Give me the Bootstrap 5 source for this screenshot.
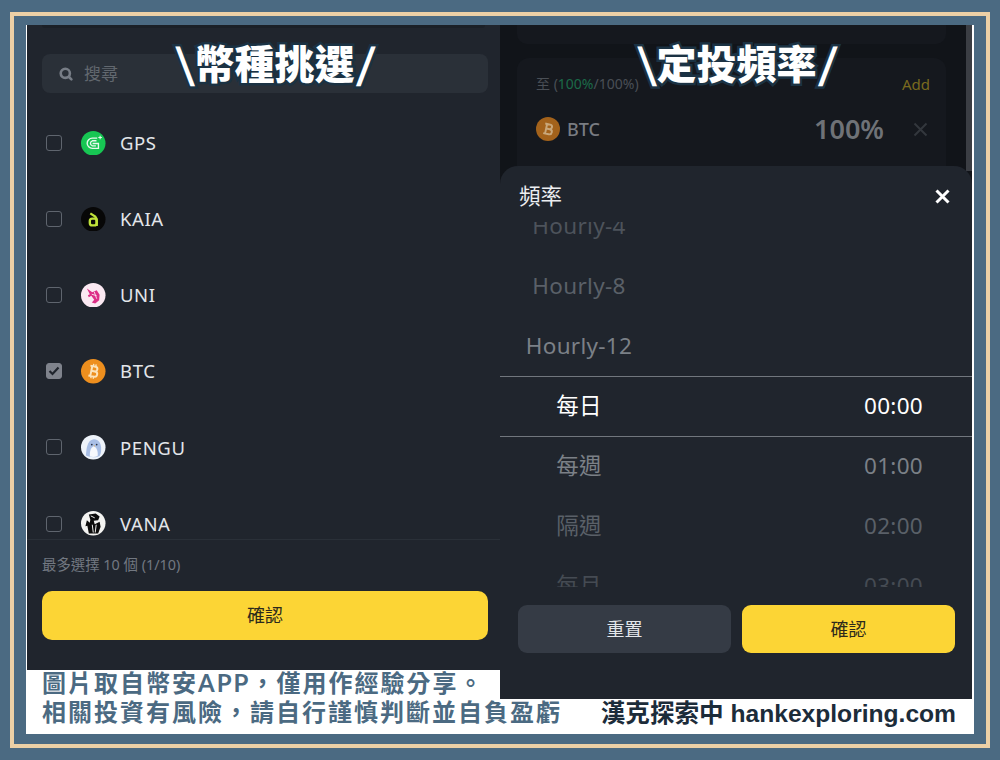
<!DOCTYPE html>
<html lang="zh-Hant">
<head>
<meta charset="utf-8">
<title>幣安定投</title>
<link href="https://cdn.jsdelivr.net/npm/bootstrap@5.3.0/dist/css/bootstrap.min.css" rel="stylesheet">
<style>
html,body{height:100%;margin:0}
body{background:#4b6a82;font-family:"Noto Sans","Noto Sans CJK TC",sans-serif;overflow:hidden}
.stage{position:relative;width:1000px;height:760px;padding:25px 26px 26px 26px}
.frame-line{position:absolute;left:10px;top:12px;width:980px;height:736px;border:4px solid #ecd0a6;pointer-events:none}
.sheet-white{background:#fff;height:709px;width:948px;display:flex;padding-left:1px;padding-right:2px}
.col-l{width:473px;display:flex;flex-direction:column;flex:none}
.col-r{width:472px;display:flex;flex-direction:column;flex:none}
.pane-l{height:645px;background:#20252d;display:flex;flex-direction:column;position:relative}
.top-stub{height:3px;margin:0 15px;background:#1b2027;border-radius:0 0 8px 8px}
.search-box{margin:26px 12px 0 15px;height:39px;background:#2a3038;border-radius:8px;display:flex;align-items:center;padding-left:16px;gap:10px;color:#62686f;font-size:17px}
.coin-list{flex:1;overflow:hidden;margin-top:12px;min-height:0}
.coin-row{height:76.1px;display:flex;align-items:center;padding-left:19px;color:#e3e6ea;font-size:18.500px;letter-spacing:.6px;font-family:"Noto Sans",sans-serif}
.tick{width:16px;height:16px;border:1.2px solid #5f656e;border-radius:3px;flex:none;display:flex;align-items:center;justify-content:center}
.tick.on{background:#7f838c;border-color:#7f838c}
.coin-ico{width:24.500px;height:24.500px;margin:0 14.500px 0 19px;flex:none;display:block}
.pane-foot{border-top:1px solid #2a3038;padding:0 12px 30px 15px;height:131px}
.foot-note{font-size:14.400px;color:#727881;line-height:17px;margin-top:16px;margin-bottom:18px;white-space:nowrap}
.btn-gold{display:block;width:100%;height:49px;background:#fcd535;border:0;border-radius:10px;color:#2c2a1c;font-size:18px;padding:0}
.btn-slate{background:#353b45;border:0;border-radius:9px;color:#e3e6ea;font-size:18px;height:48px;flex:1;padding:0}
.btn-gold.narrow{height:48px;flex:1;width:auto;border-radius:9px}
.caption{color:#4b6a82;font-weight:700;font-size:24px;letter-spacing:2px;line-height:28.500px;padding-left:15px;margin-top:-1px;white-space:nowrap;position:relative;height:65px;font-family:"Lato","Noto Sans CJK TC",sans-serif}
.pane-r{height:674px;background:#111419;position:relative;display:flex;flex-direction:column;overflow:hidden}
.scroll-strip{position:absolute;right:0;top:0;width:6px;height:146px;background:#3b3e44}
.dim-stub{height:19px;margin:0 26px 0 17px;background:#15181e;border-radius:0 0 10px 10px;flex:none}
.dim-card{margin:14px 26px 0 17px;height:140px;background:#15181e;border-radius:12px;padding:16px 18px 0 19px;flex:none}
.dim-head{display:flex;justify-content:space-between;font-size:14px;color:#4a4f56;line-height:20px}
.dim-head .gr{color:#1b6a49}
.dim-head .ad{color:#7a6a1e;font-size:15px;margin-right:-2px}
.dim-row{display:flex;align-items:center;margin-top:20px;height:30px;color:#797c82;font-size:18px;font-weight:500}
.dim-coin{margin-right:7px}
.dim-pct{margin-left:auto;font-size:27px;font-weight:600;color:#6f7277}
.dim-x{margin-left:29px;display:block}
.bottom-sheet{position:absolute;left:0;right:0;top:141px;bottom:0;background:#20252d;border-radius:18px 18px 0 0;display:flex;flex-direction:column}
.sheet-head{height:56px;display:flex;align-items:flex-start;justify-content:space-between;padding:15px 22px 0 19px;color:#eceef1;font-size:21.500px;line-height:30px;flex:none}
.sheet-head svg{margin-top:8px}
.picker{height:365px;overflow:hidden;flex:none}
.picker-in{margin-top:-26px}
.pick-row{height:60px;display:flex;align-items:center;justify-content:space-between;font-size:22.500px;letter-spacing:.3px;font-family:"Noto Sans","Noto Sans CJK TC",sans-serif}
.pick-row.sel{height:61px;margin-bottom:-1px;padding-bottom:2px;border-top:1px solid #71767d;border-bottom:1px solid #71767d;color:#fff}
.pick-l{width:158px;text-align:center;white-space:nowrap}
.pick-r{padding-right:49px}
.c1{color:#4d535b}.c2{color:#5a6068}.c3{color:#7b8087}.c4{color:#7b8087}.c5{color:#5a6068}.c6{color:#454b53}
.sheet-btns{display:flex;gap:11px;padding:18px 17px 0 18px}
.credit{height:35px;margin-right:-2px;text-align:right;padding-right:18px;color:#1c2c3a;font-weight:700;font-size:24.600px;line-height:29px;white-space:nowrap;font-family:"Liberation Sans","Noto Sans CJK TC",sans-serif}
.over-title{position:absolute;top:33px;color:#fff;font-size:40px;font-weight:900;line-height:58px;white-space:nowrap;font-family:"Noto Sans CJK TC",sans-serif;-webkit-text-stroke:5px #1b3243;paint-order:stroke fill;text-shadow:2px 2px 0 #1b3243}
.t1{left:172.500px}.t2{left:634.500px}
.bar-back,.bar-fwd{display:inline-block;width:22px;text-align:center}
.bar-back{transform:skewX(9deg)}
.bar-fwd{transform:skewX(-9deg);margin-left:1px}
</style>
</head>
<body>
<div class="stage">
  <div class="sheet-white">
    <div class="col-l">
      <div class="pane-l">
        <div class="top-stub"></div>
        <div class="search-box">
          <svg width="16" height="16" viewBox="0 0 16 16"><circle cx="7.300" cy="7.300" r="4.600" fill="none" stroke="#777d86" stroke-width="2.600"/><path d="M11 11l2.400 2.400" stroke="#777d86" stroke-width="2.600" stroke-linecap="round"/></svg>
          <span>搜尋</span>
        </div>
        <div class="coin-list">
          <div class="coin-row"><span class="tick"></span>
            <svg class="coin-ico" viewBox="0 0 25 25"><circle cx="12.500" cy="12.500" r="12.500" fill="#17c653"/><path d="M16.500 7.300H11.500a5.200 5.200 0 0 0 0 10.400h6.300v-5h-6" fill="none" stroke="#e6f9ec" stroke-width="1.400"/><path d="M15.800 10h-4.200a2.700 2.700 0 0 0 0 5.200h3.600" fill="none" stroke="#e6f9ec" stroke-width="1.400"/><path d="M19.500 4.800v3.600M17.700 6.600h3.600" stroke="#e6f9ec" stroke-width="1.100"/></svg>
            <span>GPS</span></div>
          <div class="coin-row"><span class="tick"></span>
            <svg class="coin-ico" viewBox="0 0 25 25"><circle cx="12.500" cy="12.500" r="12.500" fill="#070707"/><rect x="9" y="11.800" width="7" height="7" rx="2.500" fill="none" stroke="#bfe23a" stroke-width="2.400"/><path d="M9.500 6.500l5 3.300 1.500 2.500v7" fill="none" stroke="#bfe23a" stroke-width="2.400"/></svg>
            <span>KAIA</span></div>
          <div class="coin-row"><span class="tick"></span>
            <svg class="coin-ico" viewBox="0 0 25 25"><circle cx="12.500" cy="12.500" r="12.500" fill="#fbe9f2"/><path d="M6 5.500l5.500 4 4.500-2 3 4.500-.5 5.500-4 3.500-3.500-1 2.500-3-3-4-2.500 1.500-1-2 2-1z" fill="#dd2f87"/><path d="M11 11.500l5 1.500M13.500 9l2.500 7" stroke="#fbe9f2" stroke-width=".9"/></svg>
            <span>UNI</span></div>
          <div class="coin-row"><span class="tick on"><svg width="12" height="10" viewBox="0 0 12 10"><path d="M1.500 5l3 3 6-6.500" fill="none" stroke="#20252d" stroke-width="2.200"/></svg></span>
            <svg class="coin-ico" viewBox="0 0 25 25"><circle cx="12.500" cy="12.500" r="12.500" fill="#ee8f1e"/><g transform="rotate(12 12.500 12.500)" fill="none" stroke="#fbe3bb" stroke-width="2"><path d="M8.500 7.500h5.300c3.200 0 3.200 4.800 0 4.900h-3.300M10.500 12.400h3.900c3.600 0 3.600 5.300 0 5.300H8.500M10.500 7v11"/><path d="M11.500 5v2.500M14 5v2.500M11.500 17.700v2.300M14 17.700v2.300" stroke-width="1.400"/></g></svg>
            <span>BTC</span></div>
          <div class="coin-row"><span class="tick"></span>
            <svg class="coin-ico" viewBox="0 0 25 25"><circle cx="12.500" cy="12.500" r="12.500" fill="#eef3fa"/><path d="M5 21c.5-8 1.500-15 7-16.500 5-1.200 8 3 8.500 8 .2 3 .2 6-1.500 9-3 1.500-9 2-14-.5z" fill="#a9bfe6"/><path d="M9 22c0-5 .5-9 4-10.500 3 1 4.500 5 4 10-2.500 1.200-5.500 1.200-8 .5z" fill="#f6f8fc"/><circle cx="11" cy="9.800" r=".9" fill="#27324a"/><circle cx="16" cy="9.800" r=".9" fill="#27324a"/><path d="M12.800 10.800h1.700l-.8 1.200z" fill="#f0b04a"/></svg>
            <span>PENGU</span></div>
          <div class="coin-row"><span class="tick"></span>
            <svg class="coin-ico" viewBox="0 0 25 25"><circle cx="12.500" cy="12.500" r="12.500" fill="#f4f4f2"/><path d="M8 3.500l7-1 4 3-1.500 4-4.500.5 1 3.500 5-2.500 1 5-2.500 7H8l-1.500-8-2 .5 1.500-6 3 2.500L9.500 9z" fill="#0c0c0c"/><path d="M11.500 14l1 8M15.500 14l-1 8M10 5l4 2" stroke="#f4f4f2" stroke-width="1"/></svg>
            <span>VANA</span></div>
        </div>
        <div class="pane-foot">
          <div class="foot-note">最多選擇 10 個 (1/10)</div>
          <button type="button" class="btn btn-gold">確認</button>
        </div>
      </div>
      <div class="caption">圖片取自幣安APP，僅用作經驗分享。<br>相關投資有風險，請自行謹慎判斷並自負盈虧</div>
    </div>
    <div class="col-r">
      <div class="pane-r">
        <div class="scroll-strip"></div>
        <div class="dim-stub"></div>
        <div class="dim-card">
          <div class="dim-head"><span>至 (<span class="gr">100%</span>/100%)</span><span class="ad">Add</span></div>
          <div class="dim-row">
            <svg width="24" height="24" viewBox="0 0 25 25" class="dim-coin"><circle cx="12.500" cy="12.500" r="12.500" fill="#a3621b"/><g transform="rotate(12 12.500 12.500)" fill="none" stroke="#c9a77a" stroke-width="2"><path d="M8.500 7.500h5.300c3.200 0 3.200 4.800 0 4.900h-3.300M10.500 12.400h3.900c3.600 0 3.600 5.300 0 5.300H8.500M10.500 7v11"/></g></svg>
            <span>BTC</span>
            <span class="dim-pct">100%</span>
            <svg class="dim-x" width="15" height="15" viewBox="0 0 15 15"><path d="M1.500 1.500l12 12M13.500 1.500l-12 12" stroke="#33373d" stroke-width="2"/></svg>
          </div>
        </div>
        <div class="bottom-sheet">
          <div class="sheet-head"><span>頻率</span>
            <svg width="15" height="15" viewBox="0 0 15 15"><path d="M1.500 1.500l12 12M13.500 1.500l-12 12" stroke="#fff" stroke-width="3"/></svg></div>
          <div class="picker"><div class="picker-in">
            <div class="pick-row c1"><span class="pick-l">Hourly-4</span></div>
            <div class="pick-row c2"><span class="pick-l">Hourly-8</span></div>
            <div class="pick-row c3"><span class="pick-l">Hourly-12</span></div>
            <div class="pick-row sel"><span class="pick-l">每日</span><span class="pick-r">00:00</span></div>
            <div class="pick-row c4"><span class="pick-l">每週</span><span class="pick-r">01:00</span></div>
            <div class="pick-row c5"><span class="pick-l">隔週</span><span class="pick-r">02:00</span></div>
            <div class="pick-row c6"><span class="pick-l">每月</span><span class="pick-r">03:00</span></div>
          </div></div>
          <div class="sheet-btns">
            <button type="button" class="btn btn-slate">重置</button>
            <button type="button" class="btn btn-gold narrow">確認</button>
          </div>
        </div>
      </div>
      <div class="credit">漢克探索中 hankexploring.com</div>
    </div>
  </div>
  <div class="over-title t1"><span class="bar-back">\</span>幣種挑選<span class="bar-fwd">/</span></div>
  <div class="over-title t2"><span class="bar-back">\</span>定投頻率<span class="bar-fwd">/</span></div>
  <div class="frame-line"></div>
</div>
<script src="https://cdn.jsdelivr.net/npm/bootstrap@5.3.0/dist/js/bootstrap.bundle.min.js"></script>
</body>
</html>
